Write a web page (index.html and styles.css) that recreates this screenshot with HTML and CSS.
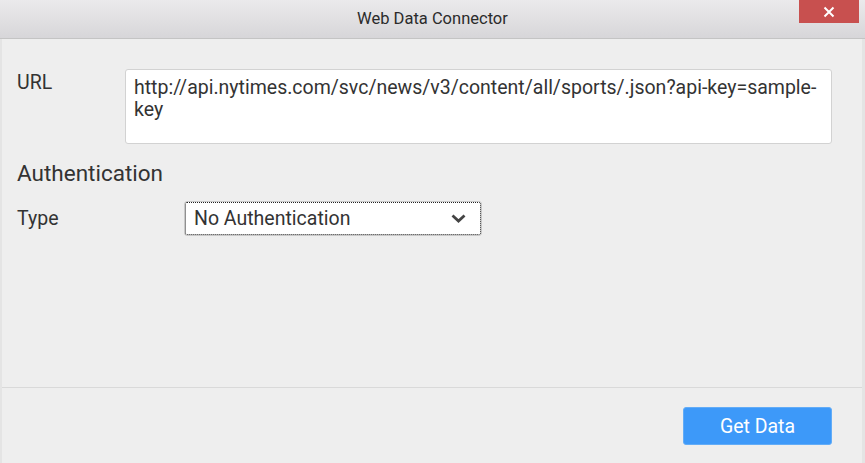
FILE: index.html
```html
<!DOCTYPE html>
<html>
<head>
<meta charset="utf-8">
<link rel="stylesheet" href="styles.css">
</head>
<body>
<div class="window">
  <div class="titlebar">
    <span class="title">Web Data Connector</span>
    <div class="close">
      <svg width="12" height="12" viewBox="0 0 12 12"><path d="M1.5 1.5 L10.5 10.5 M10.5 1.5 L1.5 10.5" stroke="#fff" stroke-width="2" fill="none"/></svg>
    </div>
  </div>
  <div class="content">
    <div class="row url-row">
      <label class="label url-label">URL</label>
      <div class="textbox">http://api.nytimes.com/svc/news/v3/content/all/sports/.json?api-key=sample-key</div>
    </div>
    <h2 class="section">Authentication</h2>
    <div class="row type-row">
      <label class="label type-label">Type</label>
      <div class="select">
        <span>No Authentication</span>
        <svg class="chev" width="15" height="10" viewBox="0 0 15 10"><path d="M1.5 1.5 L7.5 7 L13.5 1.5" stroke="#444" stroke-width="2.8" fill="none"/></svg>
      </div>
    </div>
  </div>
  <div class="footer">
    <button class="btn">Get Data</button>
  </div>
</div>
</body>
</html>
```
FILE: styles.css
```css
* { box-sizing: border-box; }
html, body { margin: 0; padding: 0; }
body {
  width: 865px;
  height: 463px;
  overflow: hidden;
  font-family: Roboto, "Liberation Sans", sans-serif;
  color: #333;
  background: #eeeeee;
}
.window {
  width: 865px;
  height: 463px;
  display: flex;
  flex-direction: column;
  background: #eeeeee;
  border-left: 2px solid #e4e4e4;
  border-right: 3px solid #e4e4e4;
}
.titlebar {
  height: 39px;
  flex: none;
  position: relative;
  display: flex;
  align-items: center;
  justify-content: center;
  background: linear-gradient(#ebeaec, #d7d6d9);
  border-bottom: 1px solid #c4c4c4;
  margin: 0 -3px 0 -2px;
}
.title {
  font-size: 16.5px;
  color: #2b2b2b;
  margin-left: 0;
  margin-top: -2px;
}
.close {
  position: absolute;
  top: 0;
  right: 6px;
  width: 60px;
  height: 23px;
  background: #c8504f;
  display: flex;
  align-items: center;
  justify-content: center;
}
.content {
  flex: 1;
  padding: 30px 30px 0 15px;
  border-bottom: 1px solid #d9d9d9;
}
.row { display: flex; }
.label { font-size: 19.5px; color: #333; }
.url-label { width: 108px; padding-top: 3px; line-height: 22px; }
.textbox {
  flex: 1;
  height: 75px;
  background: #fff;
  border: 1px solid #d2d2d2;
  border-radius: 3px;
  padding: 7px 8px;
  font-size: 19.5px;
  line-height: 22px;
  color: #333;
  word-break: break-word;
}
.section {
  font-size: 22.5px;
  font-weight: normal;
  margin: 16px 0 0 0;
  line-height: 26px;
  color: #333;
}
.type-row { margin-top: 15px; align-items: center; }
.type-label { width: 167px; }
.select {
  width: 298px;
  height: 35px;
  background: #fff;
  border: 1px solid #c8c8c8;
  border-radius: 3px;
  outline: 1px dotted #222;
  outline-offset: -2px;
  display: flex;
  align-items: center;
  justify-content: space-between;
  padding: 0 15px 0 9px;
  font-size: 19.5px;
  color: #333;
}
.chev { margin-top: 1px; }
.footer {
  height: 75px;
  flex: none;
  display: flex;
  justify-content: flex-end;
  align-items: flex-start;
  padding: 19px 30px 0 0;
}
.btn {
  width: 149px;
  height: 38px;
  background: #3d99f9;
  border: 1px solid #62acf7;
  border-radius: 3px;
  color: #fff;
  font-family: Roboto, "Liberation Sans", sans-serif;
  font-size: 19.5px;
  padding: 0;
}
```
